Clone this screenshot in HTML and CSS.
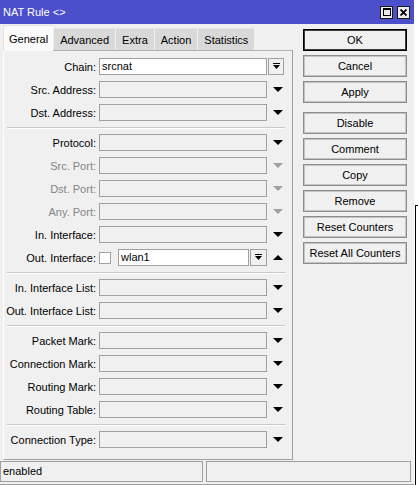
FILE: index.html
```html
<!DOCTYPE html>
<html>
<head>
<meta charset="utf-8">
<link rel="stylesheet" href="styles.css">
</head>
<body>
<div class="desk">
  <div class="window">
    <div class="titlebar">
      <span class="title">NAT Rule &lt;&gt;</span>
      <div class="tbtns">
        <span class="tbtn"><svg width="8" height="8" viewBox="0 0 8 8"><path d="M0 0h8v8H0z M1 2v5h6V2z" fill="#000" fill-rule="evenodd"/></svg></span>
        <span class="tbtn"><svg width="7" height="7" viewBox="0 0 7 7"><path d="M0.5 0.5L6.5 6.5M6.5 0.5L0.5 6.5" stroke="#000" stroke-width="1.8" fill="none"/></svg></span>
      </div>
    </div>
    <div class="main">
      <div class="left">
        <div class="tabs">
          <div class="tab active">General</div>
          <div class="tab">Advanced</div>
          <div class="tab">Extra</div>
          <div class="tab">Action</div>
          <div class="tab">Statistics</div>
        </div>
        <div class="panel">
          <div class="row"><span class="lbl">Chain:</span><div class="field on">srcnat</div><div class="dd"><svg width="7" height="7" viewBox="0 0 7 7"><rect x="0" y="0" width="7" height="1"/><path d="M0 2h7L3.5 6z"/></svg></div></div>
          <div class="row"><span class="lbl">Src. Address:</span><div class="field"></div><div class="arrow"></div></div>
          <div class="row"><span class="lbl">Dst. Address:</span><div class="field"></div><div class="arrow"></div></div>
          <div class="sep"></div>
          <div class="row"><span class="lbl">Protocol:</span><div class="field"></div><div class="arrow"></div></div>
          <div class="row"><span class="lbl dis">Src. Port:</span><div class="field"></div><div class="arrow dis"></div></div>
          <div class="row"><span class="lbl dis">Dst. Port:</span><div class="field"></div><div class="arrow dis"></div></div>
          <div class="row"><span class="lbl dis">Any. Port:</span><div class="field"></div><div class="arrow dis"></div></div>
          <div class="row"><span class="lbl">In. Interface:</span><div class="field"></div><div class="arrow"></div></div>
          <div class="row"><span class="lbl">Out. Interface:</span><div class="check"></div><div class="field on short">wlan1</div><div class="dd wide"><svg width="7" height="7" viewBox="0 0 7 7"><rect x="0" y="0" width="7" height="1"/><path d="M0 2h7L3.5 6z"/></svg></div><div class="arrow up"></div></div>
          <div class="sep"></div>
          <div class="row"><span class="lbl">In. Interface List:</span><div class="field"></div><div class="arrow"></div></div>
          <div class="row"><span class="lbl">Out. Interface List:</span><div class="field"></div><div class="arrow"></div></div>
          <div class="sep"></div>
          <div class="row"><span class="lbl">Packet Mark:</span><div class="field"></div><div class="arrow"></div></div>
          <div class="row"><span class="lbl">Connection Mark:</span><div class="field"></div><div class="arrow"></div></div>
          <div class="row"><span class="lbl">Routing Mark:</span><div class="field"></div><div class="arrow"></div></div>
          <div class="row"><span class="lbl">Routing Table:</span><div class="field"></div><div class="arrow"></div></div>
          <div class="sep"></div>
          <div class="row"><span class="lbl">Connection Type:</span><div class="field"></div><div class="arrow"></div></div>
        </div>
      </div>
      <div class="buttons">
        <div class="btn ok">OK</div>
        <div class="btn">Cancel</div>
        <div class="btn">Apply</div>
        <div class="btn gap">Disable</div>
        <div class="btn">Comment</div>
        <div class="btn">Copy</div>
        <div class="btn">Remove</div>
        <div class="btn">Reset Counters</div>
        <div class="btn">Reset All Counters</div>
      </div>
    </div>
    <div class="status">
      <div class="sbox first">enabled</div>
      <div class="sbox second"></div>
    </div>
  </div>
  <div class="behind"></div>
</div>
</body>
</html>
```

FILE: styles.css
```css
html, body {
  margin: 0;
  padding: 0;
  background: #fff;
  font-family: "Liberation Sans", Arial, sans-serif;
  font-size: 11px;
  color: #000;
}

.desk {
  display: flex;
  width: 418px;
  height: 485px;
  overflow: hidden;
}

.window {
  flex: none;
  width: 414px;
  height: 485px;
  background: #f0f0f0;
  display: flex;
  flex-direction: column;
}

.behind {
  flex: 1;
  margin-top: 205px;
  margin-left: 1px;
  border-left: 1px solid #000;
  border-top: 1px solid #000;
  background: #fff;
}

.titlebar {
  flex: none;
  height: 24px;
  background: #4b4fc9;
  color: #fff;
  display: flex;
  align-items: center;
  padding: 0 4px 0 3px;
  font-size: 11px;
}

.tbtns {
  margin-left: auto;
  display: flex;
  gap: 4px;
}

.tbtn {
  width: 13px;
  height: 13px;
  box-sizing: border-box;
  border: 1px solid #1a1a1a;
  background: #ececec;
  display: flex;
  align-items: center;
  justify-content: center;
}

.main {
  flex: 1;
  display: flex;
  padding: 1px 0 0 3px;
  min-height: 0;
}

.left {
  width: 290px;
  display: flex;
  flex-direction: column;
}

.tabs {
  flex: none;
  display: flex;
  height: 25px;
  align-items: flex-end;
  gap: 1px;
}

.tab {
  height: 22px;
  box-sizing: border-box;
  padding: 0 6px;
  background: #d9d9d9;
  border-top: 1px solid #e6e6e6;
  display: flex;
  align-items: center;
}

.tab.active {
  height: 26px;
  margin-bottom: -1px;
  background: #fafafa;
  border-top: 1px solid #e3e3e3;
  border-left: 1px solid #e3e3e3;
  padding: 0 5px;
  position: relative;
  z-index: 1;
}

.panel {
  flex: 1;
  box-sizing: border-box;
  border: 1px solid;
  border-color: #b4b4b4 #a0a0a0 #a0a0a0 #fff;
  padding-top: 7px;
}

.row {
  display: flex;
  align-items: center;
  height: 17px;
  margin-bottom: 6px;
}

.sep {
  height: 1px;
  background: #c8c8c8;
  border-bottom: 1px solid #fff;
  margin: 1px 7px 5px 3px;
}

.lbl {
  flex: none;
  width: 92px;
  margin-right: 3px;
  text-align: right;
  white-space: nowrap;
}

.lbl.dis {
  color: #858585;
}

.field {
  flex: none;
  width: 168px;
  height: 17px;
  box-sizing: border-box;
  border: 1px solid #a0a0a0;
  background: #f0f0f0;
  padding-left: 2px;
  line-height: 15px;
}

.field.on {
  background: #fff;
}

.field.short {
  width: 131px;
}

.check {
  flex: none;
  width: 12px;
  height: 12px;
  box-sizing: border-box;
  border: 1px solid #a0a0a0;
  background: #fff;
  margin-right: 7px;
}

.dd {
  flex: none;
  width: 16px;
  height: 17px;
  margin-left: 1px;
  box-sizing: border-box;
  border: 1px solid #a0a0a0;
  background: #f0f0f0;
  display: flex;
  align-items: center;
  justify-content: center;
}

.dd.wide {
  width: 17px;
}

.arrow {
  flex: none;
  width: 22px;
  display: flex;
  justify-content: center;
}

.arrow::after {
  content: "";
  border-left: 5px solid transparent;
  border-right: 5px solid transparent;
  border-top: 5px solid #000;
}

.arrow.dis::after {
  border-top-color: #a0a0a0;
}

.arrow.up::after {
  border-top: 0;
  border-bottom: 5px solid #000;
}

.buttons {
  flex: none;
  width: 104px;
  margin-left: 10px;
  padding-top: 4px;
  display: flex;
  flex-direction: column;
  gap: 4px;
}

.btn {
  height: 22px;
  box-sizing: border-box;
  border: 1px solid #8c8c8c;
  box-shadow: inset 0 0 0 1px #c4c4c4;
  background: #f0f0f0;
  display: flex;
  align-items: center;
  justify-content: center;
  white-space: nowrap;
}

.btn.ok {
  border-color: #000;
  box-shadow: inset 0 0 0 1px #3c3c3c;
}

.btn.gap {
  margin-top: 5px;
}

.status {
  flex: none;
  height: 25px;
  box-sizing: border-box;
  padding-top: 1px;
  border-bottom: 1px solid #a0a0a0;
  display: flex;
  gap: 3px;
}

.sbox {
  height: 21px;
  box-sizing: border-box;
  border: 1px solid #a0a0a0;
  padding-left: 2px;
  line-height: 19px;
}

.sbox.first {
  width: 203px;
}

.sbox.second {
  width: 205px;
}
```
